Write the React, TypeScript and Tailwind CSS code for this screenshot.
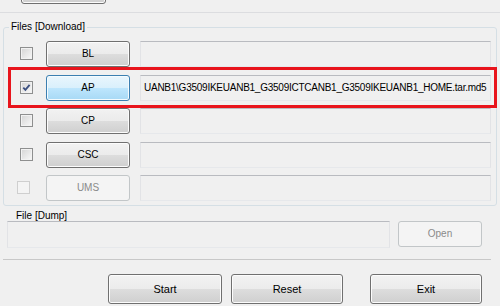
import React from "react";

const btn =
  "flex items-center justify-center rounded-[3px] border border-[#707070] bg-[linear-gradient(to_bottom,#f2f2f2_0%,#ebebeb_50%,#dddddd_50%,#cfcfcf_100%)] shadow-[inset_0_0_0_1px_#fcfcfc] text-black";
const btnHot =
  "flex items-center justify-center rounded-[3px] border border-[#3c7fb1] bg-[linear-gradient(to_bottom,#eaf6fd_0%,#d9f0fc_50%,#bee6fd_50%,#a7d9f5_100%)] shadow-[inset_0_0_0_1px_#f4fbfe] text-black";
const btnOff =
  "flex items-center justify-center rounded-[3px] border border-[#c2c6c8] bg-[#f4f4f4] text-[#8a8a8a]";
const field =
  "h-[26px] border border-t-[#b9bbc0] border-x-[#e2e3e6] border-b-[#e6e8eb] bg-[#f0f0f0] flex items-center pl-[3px] overflow-hidden whitespace-nowrap";

function Check({ checked, disabled }: { checked?: boolean; disabled?: boolean }) {
  if (disabled) {
    return <div className="w-[13px] h-[13px] border border-[#cfcfcf] bg-[#f4f4f4] shrink-0" />;
  }
  return (
    <div className="w-[13px] h-[13px] border border-[#8e8f8f] bg-[linear-gradient(135deg,#d4d4d4,#f9f9f9)] shadow-[inset_0_0_0_1px_#f2f2f2] shrink-0 relative">
      {checked && (
        <svg width="11" height="11" viewBox="0 0 11 11" className="absolute left-0 top-0">
          <path d="M2.3 5.6 L4.4 7.8 L8.6 2.8" fill="none" stroke="#3b4f80" strokeWidth="1.8" />
        </svg>
      )}
    </div>
  );
}

function Row({
  label,
  mt,
  checked,
  hot,
  disabled,
  text,
}: {
  label: string;
  mt: string;
  checked?: boolean;
  hot?: boolean;
  disabled?: boolean;
  text?: string;
}) {
  return (
    <div className={`flex items-center h-[25px] ${mt} ${disabled ? "pl-[13px]" : "pl-[16px]"}`}>
      <Check checked={checked} disabled={disabled} />
      <div
        className={`${hot ? btnHot : disabled ? btnOff : btn} h-[26px] w-[84px] ${disabled ? "ml-[16px]" : "ml-[13px]"}`}
      >
        {label}
      </div>
      <div className={`${field} ml-[10px] w-[351px] tracking-[-0.25px]`}>{text}</div>
    </div>
  );
}

export default function App() {
  return (
    <div className="w-[500px] h-[306px] bg-[#f0f0f0] overflow-hidden relative font-['Liberation_Sans',Arial,sans-serif] text-[10px] leading-[12px] text-black">
      {/* remnant of the previous group */}
      <div className="h-[13px] border-b border-[#dcdde0] flex items-end">
        <div className={`${btn} ml-[21px] mb-[8px] w-[85px] h-[25px] shrink-0`} />
      </div>

      {/* Files [Download] */}
      <fieldset className="mt-[8px] ml-[3px] w-[494px] border border-[#d5dfe5] rounded-[3px] p-0 pb-[5px]">
        <legend className="ml-[5px] px-[2px] leading-[12px]">Files [Download]</legend>
        <Row label="BL" mt="mt-[8px]" />
        <Row
          label="AP"
          mt="mt-[9px]"
          checked
          hot
          text="UANB1\G3509IKEUANB1_G3509ICTCANB1_G3509IKEUANB1_HOME.tar.md5"
        />
        <Row label="CP" mt="mt-[8px]" />
        <Row label="CSC" mt="mt-[9px]" />
        <Row label="UMS" mt="mt-[8px]" disabled />
      </fieldset>

      {/* File [Dump] */}
      <div className="ml-[3px] w-[488px] border-b border-[#c8c8c8] pb-[11px]">
        <div className="pl-[13px] pt-[4px] leading-[12px]">File [Dump]</div>
        <div className="flex items-start -mt-[1px]">
          <div className={`${field} h-[27px] ml-[4px] w-[383px]`} />
          <div className={`${btnOff} ml-[8px] w-[84px] h-[26px]`}>Open</div>
        </div>
      </div>

      {/* bottom buttons */}
      <div className="flex mt-[14px] text-[11px]">
        <div className={`${btn} ml-[108px] w-[114px] h-[30px]`}>Start</div>
        <div className={`${btn} ml-[9px] w-[112px] h-[30px]`}>Reset</div>
        <div className={`${btn} ml-[27px] w-[112px] h-[30px]`}>Exit</div>
      </div>

      {/* red highlight */}
      <div className="absolute left-[8px] top-[67px] w-[489px] h-[41px] border-[3px] border-[#e8141c] pointer-events-none" />
    </div>
  );
}
